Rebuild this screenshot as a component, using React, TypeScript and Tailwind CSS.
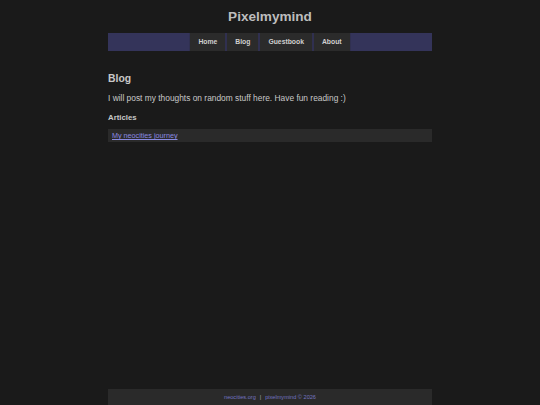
import React from 'react';

export default function App() {
  const links = ["Home", "Blog", "Guestbook", "About"];

  return (
    <div className="min-h-[405px] bg-[#1a1a1a] text-[#c8c8c8] flex flex-col" style={{ fontFamily: '"Liberation Sans", Arial, sans-serif' }}>
      <header className="w-[324px] mx-auto">
        <h1 className="text-[13.6px] font-bold text-[#bdbdbd] text-center leading-none pt-[10px] pb-[9px]">Pixelmymind</h1>
        <nav className="h-[18px] bg-[#34345a] flex justify-center">
          {links.map((l) => (
            <a key={l} href="#" className="h-full px-[8px] flex items-center bg-[#2b2b2b] border-x border-[#303050] text-[6.8px] font-bold text-[#d0d0d0]">
              {l}
            </a>
          ))}
        </nav>
      </header>

      <main className="w-[324px] mx-auto flex-1 pt-[23px]">
        <h2 className="text-[10.4px] font-bold text-[#c8c8c8] leading-none">Blog</h2>
        <p className="text-[8.4px] leading-none mt-[10px]">I will post my thoughts on random stuff here. Have fun reading :)</p>
        <h3 className="text-[7.8px] font-bold leading-none mt-[12px]">Articles</h3>
        <div className="mt-[7px] h-[13px] bg-[#2a2a2a] flex items-center px-[4px]">
          <a href="#" className="text-[7.2px] text-[#8a8ae0] underline leading-none">My neocities journey</a>
        </div>
      </main>

      <footer className="w-[324px] mx-auto h-[16px] bg-[#2a2a2a] flex items-center justify-center gap-[4px] text-[5.6px] text-[#7474c0]">
        <span>neocities.org</span>
        <span className="text-[#aaaaaa]">|</span>
        <span>pixelmymind © 2026</span>
      </footer>
    </div>
  );
}
